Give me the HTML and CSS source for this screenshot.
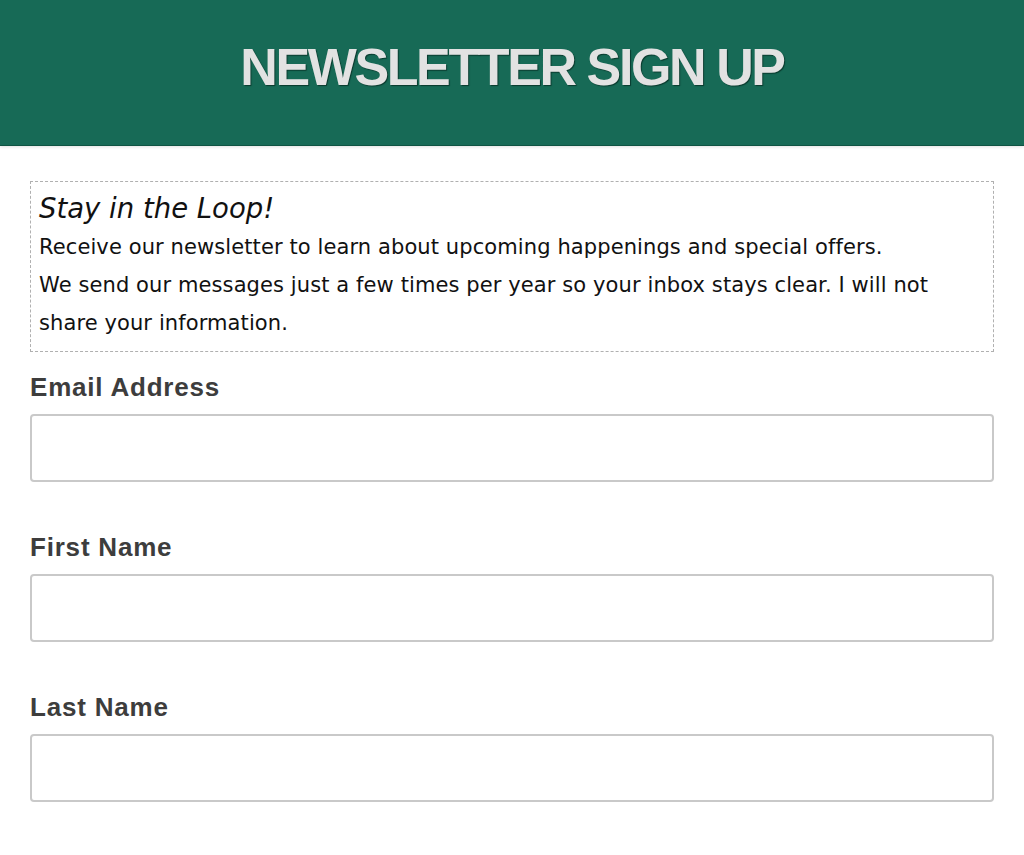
FILE: index.html
```html
<!DOCTYPE html>
<html lang="en">
<head>
<meta charset="utf-8">
<title>Newsletter Sign Up</title>
<link rel="stylesheet" href="styles.css">
</head>
<body>
<header class="banner">
  <h1 class="banner-title">NEWSLETTER SIGN UP</h1>
</header>
<main class="content">
  <div class="intro">
    <p class="intro-title">Stay in the Loop!</p>
    <p class="intro-text">Receive our newsletter to learn about upcoming happenings and special offers.</p>
    <p class="intro-text">We send our messages just a few times per year so your inbox stays clear. I will not share your information.</p>
  </div>
  <form class="form">
    <div class="field">
      <label class="field-label" for="email">Email Address</label>
      <input class="field-input" id="email" type="email">
    </div>
    <div class="field">
      <label class="field-label" for="first">First Name</label>
      <input class="field-input" id="first" type="text">
    </div>
    <div class="field">
      <label class="field-label" for="last">Last Name</label>
      <input class="field-input" id="last" type="text">
    </div>
  </form>
</main>
</body>
</html>
```
FILE: styles.css
```css
html, body {
  margin: 0;
  padding: 0;
  background: #ffffff;
}

.banner {
  height: 146px;
  background: #176a56;
  border-bottom: 1px solid #0f5443;
  box-shadow: 0 1px 3px rgba(0, 0, 0, 0.12);
  display: flex;
  align-items: center;
  justify-content: center;
  box-sizing: border-box;
  padding-bottom: 12px;
}

.banner-title {
  margin: 0;
  font-family: "Liberation Sans", Arial, sans-serif;
  font-weight: bold;
  font-size: 52px;
  letter-spacing: -2.4px;
  color: #e2e2e2;
  text-shadow: 1px 1px 1px #0a3a2e;
}

.content {
  padding: 35px 30px 0 30px;
}

.intro {
  border: 1px dashed #b0b0b0;
  padding: 6px 24px 9px 8px;
  font-family: "DejaVu Sans", Tahoma, Verdana, sans-serif;
  color: #111;
}

.intro p {
  margin: 0;
}

.intro-title {
  font-style: italic;
  font-size: 27.5px;
  line-height: 40px;
}

.intro-text {
  font-size: 21px;
  line-height: 38px;
  letter-spacing: 0.1px;
}

.form {
  display: flex;
  flex-direction: column;
  gap: 49px;
  margin-top: 19px;
}

.field {
  display: flex;
  flex-direction: column;
  gap: 11px;
}

.field-label {
  font-family: "Liberation Sans", Arial, sans-serif;
  font-weight: bold;
  font-size: 26px;
  line-height: 32px;
  letter-spacing: 0.8px;
  color: #3d3d3d;
}

.field-input {
  display: block;
  box-sizing: border-box;
  width: 100%;
  height: 68px;
  margin: 0;
  border: 2px solid #c9c9c9;
  border-radius: 4px;
  background: #fff;
  font-size: 20px;
  padding: 0 10px;
}
```
